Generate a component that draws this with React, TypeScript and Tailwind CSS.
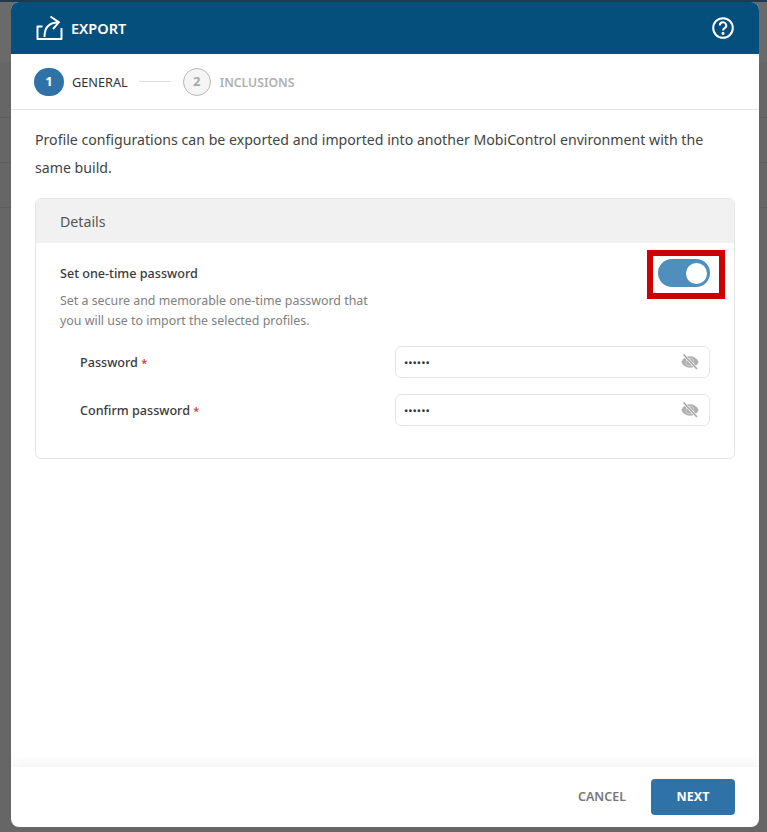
import React from "react";

const font = { fontFamily: '"Noto Sans", sans-serif' };

function EyeOff() {
  return (
    <svg width="18" height="16" viewBox="0 0 18 16" className="shrink-0">
      <path d="M0.300 8C2 4.300 5.200 2.300 9 2.300s7 2 8.700 5.700c-1.700 3.700-4.900 5.700-8.700 5.700S2 11.700 0.300 8Z" fill="#b0b0b0" />
      <circle cx="9" cy="8" r="4" fill="none" stroke="#e4e4e4" strokeWidth="0.600" />
      <path d="M2.500 0.500 16 15" stroke="#ffffff" strokeWidth="2.600" />
      <path d="M2.500 0.500 16 15" stroke="#a8a8a8" strokeWidth="1.600" />
    </svg>
  );
}

function PasswordRow({ label }: { label: string }) {
  return (
    <div className="flex items-center h-8">
      <div className="w-[335px] pl-[20px] pt-[3px] text-[12.600px] font-medium text-[#3a3a3a]">
        {label} <span className="text-[11px] text-[#d0342c]">*</span>
      </div>
      <div className="flex-1 h-8 rounded-md border border-[#e6e6e6] flex items-center justify-between pl-[8px] pr-[10px]">
        <span className="pt-[2px] text-[11.400px] text-[#333333]">••••••</span>
        <EyeOff />
      </div>
    </div>
  );
}

export default function App() {
  return (
    <div style={font} className="relative w-[767px] h-[832px] overflow-hidden bg-[#666666]">
      <div className="h-[2px] bg-[#1f3a4f]" />
      <div className="h-[60px] bg-[#6a6a6a]" />
      <div className="h-[56px] border-b border-[#5e5e5e]" />
      <div className="h-[45px] border-b border-[#5e5e5e]" />
      <div className="h-[45px] border-b border-[#5e5e5e]" />

      <div className="absolute left-[11px] top-[2px] w-[748px] h-[825px] bg-white rounded-lg overflow-hidden flex flex-col">
        <div className="h-[52px] shrink-0 bg-[#054f7d] flex items-center justify-between pl-[25px] pr-[25px]">
          <div className="flex items-center gap-[8px]">
            <svg width="27" height="26" viewBox="0 0 27 26" fill="none" stroke="#ffffff" strokeWidth="2">
              <path d="M6.500 11.500H1.500V24H25.500V13" strokeLinejoin="round" />
              <path d="M8.500 22C8.500 13 13 7.500 22 7.500" />
              <path d="M14.500 1.500 22.800 7.300 17 14" />
            </svg>
            <span className="pt-[1px] text-[14.500px] font-semibold text-white">EXPORT</span>
          </div>
          <svg width="22" height="22" viewBox="0 0 22 22" fill="none" stroke="#ffffff" strokeWidth="2">
            <circle cx="11" cy="11" r="9.800" />
            <path d="M7.800 8.500a3.200 3.200 0 1 1 4.800 2.700c-1 .6-1.600 1.200-1.600 2.400" />
            <circle cx="11" cy="16.300" r="0.600" fill="#ffffff" />
          </svg>
        </div>

        <div className="h-[56px] shrink-0 border-b border-[#e6e6e6] flex items-center pl-[23px]">
          <div className="w-[30px] h-[28px] pt-[1px] rounded-full bg-[#2f72a8] text-white text-[13px] font-bold flex items-center justify-center">1</div>
          <span className="ml-[8px] pt-[3px] text-[12.700px] text-[#333333]">GENERAL</span>
          <div className="ml-[11px] w-[32px] h-[1px] bg-[#dddddd]" />
          <div className="ml-[12px] w-[28px] h-[28px] pt-[1px] rounded-full border border-[#b8b8b8] bg-[#f5f5f5] text-[#aaaaaa] text-[13px] font-bold flex items-center justify-center">2</div>
          <span className="ml-[9px] pt-[3px] text-[12.200px] font-semibold text-[#b0b0b0]">INCLUSIONS</span>
        </div>

        <div className="flex-1 px-[24px] pt-[16px]">
          <p className="text-[14.150px] leading-[28px] text-[#444444]">
            Profile configurations can be exported and imported into another MobiControl environment with the same build.
          </p>
          <div className="mt-[16px] h-[261px] border border-[#e6e6e6] rounded-md overflow-hidden">
            <div className="h-[44px] bg-[#f1f1f1] flex items-center pl-[24px] pt-[2px] text-[14.200px] text-[#555555]">Details</div>
            <div className="pl-[24px] pr-[24px] pt-[20px] relative">
              <div className="text-[12.600px] font-medium text-[#3a3a3a] leading-[22px]">Set one-time password</div>
              <p className="mt-[6px] w-[320px] text-[12.400px] leading-[20px] text-[#808080]">
                Set a secure and memorable one-time password that you will use to import the selected profiles.
              </p>
              <div className="mt-[15px] flex flex-col gap-[16px]">
                <PasswordRow label="Password" />
                <PasswordRow label="Confirm password" />
              </div>
              <div className="absolute right-[9px] top-[7px] w-[78px] h-[49px] border-[6px] border-[#cc0000] flex items-start pl-[5px] pt-[3px]">
                <div className="w-[52px] h-[28px] rounded-full bg-[#4f8fbd] relative">
                  <div className="absolute right-[3px] top-[4px] w-[21px] h-[21px] rounded-full bg-white" />
                </div>
              </div>
            </div>
          </div>
        </div>

        <div className="h-[60px] shrink-0 shadow-[0_-4px_10px_rgba(0,0,0,0.05)] flex items-center justify-end pr-[24px]">
          <span className="text-[12.500px] font-semibold text-[#777777] mr-[25px]">CANCEL</span>
          <div className="w-[84px] h-[36px] rounded bg-[#2f72a8] text-white text-[12.500px] font-bold flex items-center justify-center">NEXT</div>
        </div>
      </div>
    </div>
  );
}
